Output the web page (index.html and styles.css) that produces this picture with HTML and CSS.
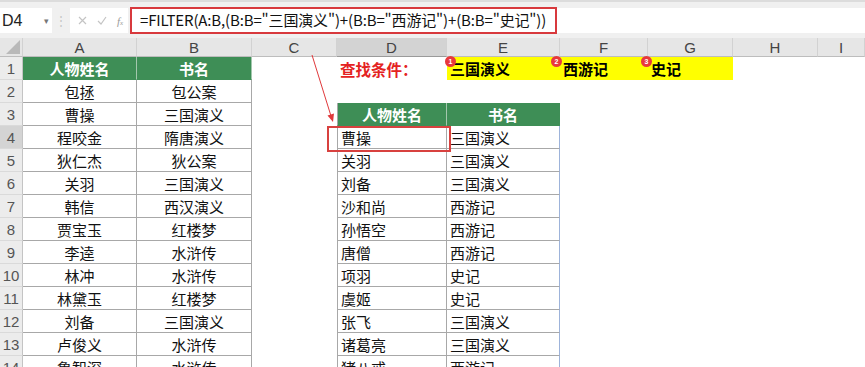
FILE: index.html
```html
<!DOCTYPE html>
<html lang="zh">
<head>
<meta charset="utf-8">
<link rel="stylesheet" href="styles.css">
</head>
<body>
<div class="app">
  <div class="fbar">
    <div class="namebox"><span>D4</span><span class="dd">▾</span></div>
    <div class="sep">⋮</div>
    <div class="icons">
      <svg width="9" height="9" viewBox="0 0 9 9"><path d="M1 1L8 8M8 1L1 8" stroke="#c4c4c4" stroke-width="1.2"/></svg>
      <svg width="10" height="9" viewBox="0 0 10 9"><path d="M1 5L4 8L9 1" fill="none" stroke="#c4c4c4" stroke-width="1.2"/></svg>
      <span class="fx">f<small>x</small></span>
    </div>
    <div class="formula"><div class="fbox">=FILTER(A:B,(B:B="三国演义")+(B:B="西游记")+(B:B="史记"))</div></div>
  </div>
  <div class="sheet">
    <div class="ch corner"><svg width="14" height="14" viewBox="0 0 14 14"><path d="M14 0V14H0Z" fill="#b9b9b9"/></svg></div>
    <div class="ch">A</div><div class="ch">B</div><div class="ch">C</div><div class="ch act">D</div><div class="ch">E</div><div class="ch">F</div><div class="ch">G</div><div class="ch">H</div><div class="ch">I</div>

    <div class="rh">1</div><div class="c t g">人物姓名</div><div class="c t g">书名</div><div class="c"></div><div class="c red">查找条件：</div><div class="c y">三国演义</div><div class="c y">西游记</div><div class="c y">史记</div><div class="c"></div><div class="c"></div>

    <div class="rh">2</div><div class="c t">包拯</div><div class="c t">包公案</div><div class="c"></div><div class="c"></div><div class="c"></div><div class="c"></div><div class="c"></div><div class="c"></div><div class="c"></div>

    <div class="rh">3</div><div class="c t">曹操</div><div class="c t">三国演义</div><div class="c"></div><div class="c d dl g">人物姓名</div><div class="c d dr g">书名</div><div class="c"></div><div class="c"></div><div class="c"></div><div class="c"></div>

    <div class="rh act">4</div><div class="c t">程咬金</div><div class="c t">隋唐演义</div><div class="c"></div><div class="c d dl">曹操</div><div class="c d dr">三国演义</div><div class="c"></div><div class="c"></div><div class="c"></div><div class="c"></div>

    <div class="rh">5</div><div class="c t">狄仁杰</div><div class="c t">狄公案</div><div class="c"></div><div class="c d dl">关羽</div><div class="c d dr">三国演义</div><div class="c"></div><div class="c"></div><div class="c"></div><div class="c"></div>

    <div class="rh">6</div><div class="c t">关羽</div><div class="c t">三国演义</div><div class="c"></div><div class="c d dl">刘备</div><div class="c d dr">三国演义</div><div class="c"></div><div class="c"></div><div class="c"></div><div class="c"></div>

    <div class="rh">7</div><div class="c t">韩信</div><div class="c t">西汉演义</div><div class="c"></div><div class="c d dl">沙和尚</div><div class="c d dr">西游记</div><div class="c"></div><div class="c"></div><div class="c"></div><div class="c"></div>

    <div class="rh">8</div><div class="c t">贾宝玉</div><div class="c t">红楼梦</div><div class="c"></div><div class="c d dl">孙悟空</div><div class="c d dr">西游记</div><div class="c"></div><div class="c"></div><div class="c"></div><div class="c"></div>

    <div class="rh">9</div><div class="c t">李逵</div><div class="c t">水浒传</div><div class="c"></div><div class="c d dl">唐僧</div><div class="c d dr">西游记</div><div class="c"></div><div class="c"></div><div class="c"></div><div class="c"></div>

    <div class="rh">10</div><div class="c t">林冲</div><div class="c t">水浒传</div><div class="c"></div><div class="c d dl">项羽</div><div class="c d dr">史记</div><div class="c"></div><div class="c"></div><div class="c"></div><div class="c"></div>

    <div class="rh">11</div><div class="c t">林黛玉</div><div class="c t">红楼梦</div><div class="c"></div><div class="c d dl">虞姬</div><div class="c d dr">史记</div><div class="c"></div><div class="c"></div><div class="c"></div><div class="c"></div>

    <div class="rh">12</div><div class="c t">刘备</div><div class="c t">三国演义</div><div class="c"></div><div class="c d dl">张飞</div><div class="c d dr">三国演义</div><div class="c"></div><div class="c"></div><div class="c"></div><div class="c"></div>

    <div class="rh">13</div><div class="c t">卢俊义</div><div class="c t">水浒传</div><div class="c"></div><div class="c d dl">诸葛亮</div><div class="c d dr">三国演义</div><div class="c"></div><div class="c"></div><div class="c"></div><div class="c"></div>

    <div class="rh">14</div><div class="c t">鲁智深</div><div class="c t">水浒传</div><div class="c"></div><div class="c d dl">猪八戒</div><div class="c d dr">西游记</div><div class="c"></div><div class="c"></div><div class="c"></div><div class="c"></div>
  </div>

  <svg class="arrow" width="865" height="367" viewBox="0 0 865 367">
    <line x1="312" y1="55" x2="331" y2="116" stroke="#e0393b" stroke-width="1"/>
    <polygon points="333,122 334,113.5 327.5,115.5" fill="#e0393b"/>
  </svg>
  <div class="selbox"></div>
  <span class="badge b1">1</span>
  <span class="badge b2">2</span>
  <span class="badge b3">3</span>
</div>
</body>
</html>
```

FILE: styles.css
```css
* { box-sizing: border-box; margin: 0; padding: 0; }
body {
  margin: 0;
  width: 865px;
  height: 367px;
  overflow: hidden;
  background: #fff;
  font-family: "Noto Sans CJK SC", "Microsoft YaHei", sans-serif;
}
.app {
  position: relative;
  width: 865px;
  height: 367px;
  overflow: hidden;
}

/* formula bar */
.fbar {
  height: 38px;
  display: flex;
  align-items: flex-start;
  padding-top: 8px;
  background: linear-gradient(#dcdcdc 0 2px, #f0f0f0 2px);
}
.namebox {
  width: 52px;
  height: 25px;
  background: #fff;
  display: flex;
  align-items: center;
  justify-content: space-between;
  padding: 0 3px 0 2px;
  font: 16px "Liberation Sans", sans-serif;
  color: #222;
}
.namebox .dd { font-size: 9px; color: #777; }
.sep {
  width: 18px;
  height: 25px;
  display: flex;
  align-items: center;
  justify-content: center;
  color: #c6c6c6;
  font: 12px "Liberation Sans", sans-serif;
}
.icons {
  width: 58px;
  height: 25px;
  background: #fff;
  display: flex;
  align-items: center;
  gap: 10px;
  padding-left: 8px;
}
.fx {
  font: italic 11px "Liberation Serif", serif;
  color: #9a9a9a;
}
.fx small { font-size: 7px; }
.formula {
  flex: 1;
  height: 25px;
  margin-left: 2px;
  background: #fff;
  display: flex;
}
.fbox {
  width: 427px;
  height: 27px;
  margin-top: -1px;
  border: 2px solid #d8393d;
  padding-left: 8px;
  font-size: 15px;
  letter-spacing: -0.15px;
  line-height: 22px;
  color: #111;
  white-space: nowrap;
}

/* sheet grid */
.sheet {
  display: grid;
  grid-template-columns: 23px 114px 115px 85px 110px 113px 88px 85px 85px 47px;
  grid-template-rows: 19px;
  grid-auto-rows: 23px;
}
.ch {
  background: #e6e6e6;
  border-right: 1px solid #d2d2d2;
  border-bottom: 1px solid #bdbdbd;
  display: flex;
  align-items: center;
  justify-content: center;
  font: 15px "Liberation Sans", sans-serif;
  color: #444;
}
.ch.act { background: #d3d3d3; border-bottom-color: #9a9a9a; }
.corner { align-items: flex-end; justify-content: flex-end; padding: 0 2px 2px 0; }
.rh {
  background: #ececec;
  border-right: 1px solid #c4c4c4;
  border-bottom: 1px solid #dadada;
  display: flex;
  align-items: center;
  justify-content: center;
  font: 15px "Liberation Sans", sans-serif;
  color: #555;
}
.rh.act { background: #d4d4d4; }
.c {
  display: flex;
  align-items: center;
  font-size: 15px;
  color: #111;
  white-space: nowrap;
  overflow: visible;
}
.t {
  justify-content: center;
  border-right: 1px solid #a8a8a8;
  border-bottom: 1px solid #a8a8a8;
}
.d {
  padding-left: 3px;
  border-right: 1px solid #a8a8a8;
  border-bottom: 1px solid #a8a8a8;
}
.dl { border-left: 1px solid #a8a8a8; }
.dr { border-right-color: #9db3da; }
.g {
  background: #3e8e56;
  color: #fff;
  font-weight: bold;
  justify-content: center;
  padding-left: 0;
  border-right-color: #a3c7ad;
  border-bottom-color: #3e8e56;
}
.dr.g { border-right-color: #3e8e56; }
.red {
  color: #e42222;
  font-weight: bold;
  padding-left: 3px;
  font-size: 15.5px;
}
.y {
  background: #ffff00;
  font-weight: bold;
  padding-left: 3px;
  color: #000;
}

/* annotations */
.arrow {
  position: absolute;
  left: 0;
  top: 0;
  pointer-events: none;
}
.selbox {
  position: absolute;
  left: 327px;
  top: 126px;
  width: 124px;
  height: 26px;
  border: 2px solid #d8413f;
}
.badge {
  position: absolute;
  top: 56px;
  width: 11px;
  height: 11px;
  border-radius: 50%;
  background: #e8383d;
  color: #fff;
  font: bold 7px "Liberation Sans", sans-serif;
  display: flex;
  align-items: center;
  justify-content: center;
}
.b1 { left: 445px; }
.b2 { left: 551px; }
.b3 { left: 641px; }
```
